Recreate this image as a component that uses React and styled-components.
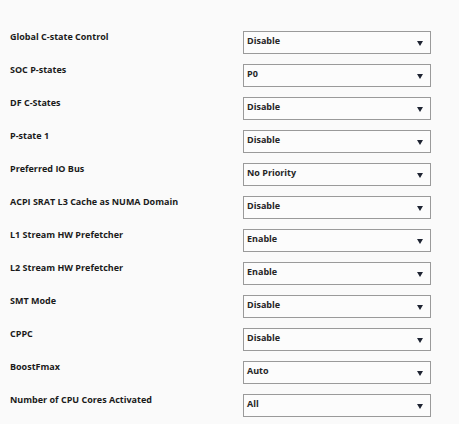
import React from 'react';
import styled, { createGlobalStyle } from 'styled-components';

const GlobalStyle = createGlobalStyle`
    html, body {
        margin: 0;
        padding: 0;
        background: #fafafa;
    }
`;

const settings = [
    { label: 'Global C-state Control', value: 'Disable' },
    { label: 'SOC P-states', value: 'P0' },
    { label: 'DF C-States', value: 'Disable' },
    { label: 'P-state 1', value: 'Disable' },
    { label: 'Preferred IO Bus', value: 'No Priority' },
    { label: 'ACPI SRAT L3 Cache as NUMA Domain', value: 'Disable' },
    { label: 'L1 Stream HW Prefetcher', value: 'Enable' },
    { label: 'L2 Stream HW Prefetcher', value: 'Enable' },
    { label: 'SMT Mode', value: 'Disable' },
    { label: 'CPPC', value: 'Disable' },
    { label: 'BoostFmax', value: 'Auto' },
    { label: 'Number of CPU Cores Activated', value: 'All' },
];

const App = () => {
    return (
        <Page>
            <GlobalStyle />
            {settings.map((s) => (
                <Row key={s.label}>
                    <Label>{s.label}</Label>
                    <Select>
                        <Value>{s.value}</Value>
                        <Arrow />
                    </Select>
                </Row>
            ))}
        </Page>
    );
};

export default App;

const Page = styled.div`
    width: 459px;
    height: 424px;
    box-sizing: border-box;
    padding: 31px 0 0 10px;
    background: #fafafa;
    font-family: "Open Sans", "Noto Sans", sans-serif;
    overflow: hidden;
`;

const Row = styled.div`
    display: grid;
    grid-template-columns: 233px 188px;
    height: 33px;
`;

const Label = styled.div`
    font-size: 9px;
    font-weight: 700;
    line-height: 12px;
    color: #1a1a1a;
`;

const Select = styled.div`
    height: 23px;
    box-sizing: border-box;
    border: 1px solid #9a9a9a;
    background: #fcfcfc;
    display: flex;
    justify-content: space-between;
    padding: 3px 7px 0 3px;
`;

const Value = styled.span`
    font-size: 9px;
    font-weight: 700;
    line-height: 12px;
    color: #262626;
`;

const Arrow = styled.span`
    align-self: flex-start;
    margin-top: 6px;
    width: 0;
    height: 0;
    border-left: 3.5px solid transparent;
    border-right: 3.5px solid transparent;
    border-top: 5px solid #1f2533;
`;
